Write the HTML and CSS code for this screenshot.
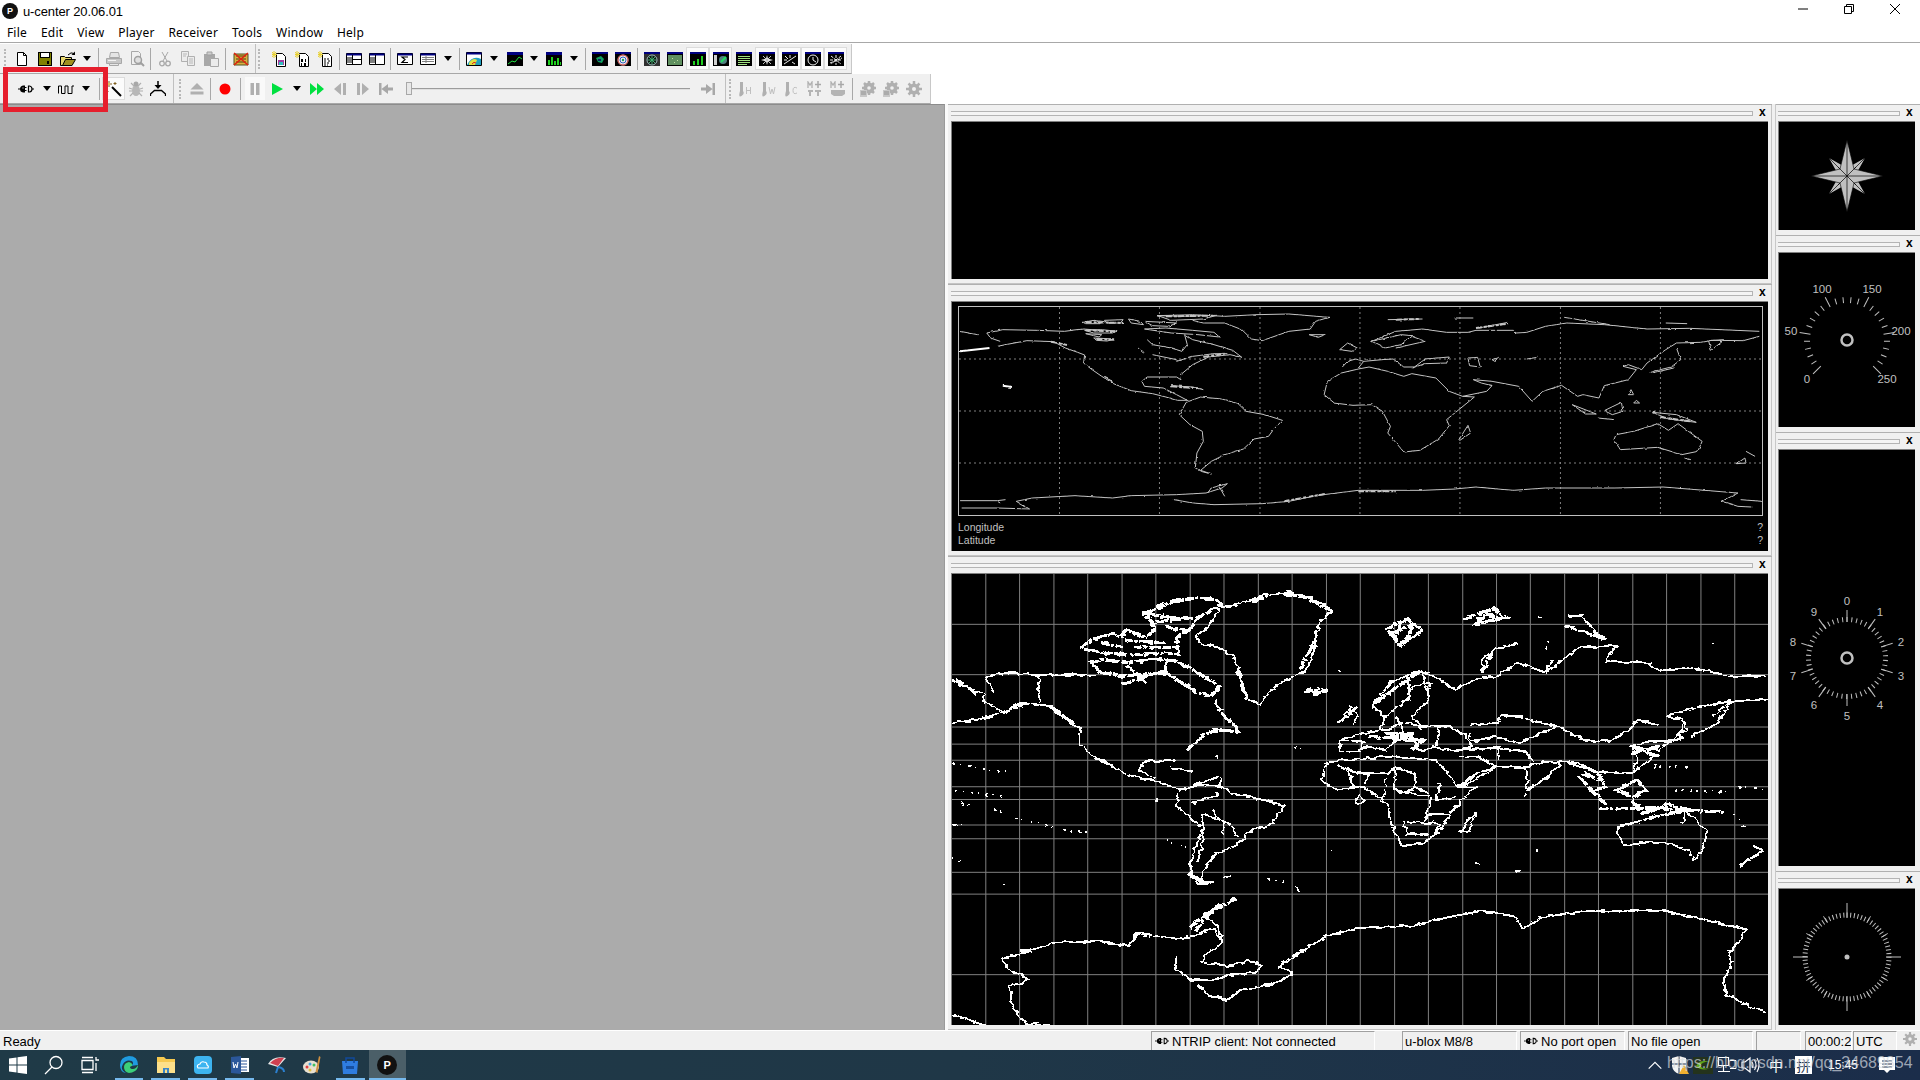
FILE: index.html
```html
<!DOCTYPE html>
<html lang="en">
<head>
<meta charset="utf-8">
<title>u-center 20.06.01</title>
<link rel="stylesheet" href="styles.css">
</head>
<body>
<svg class="sprite" aria-hidden="true">
<defs>
<filter id="rough" x="-3%" y="-3%" width="106%" height="106%" color-interpolation-filters="sRGB"><feTurbulence type="fractalNoise" baseFrequency=".07" numOctaves="2" seed="4" result="n"/><feDisplacementMap in="SourceGraphic" in2="n" scale="13" xChannelSelector="R" yChannelSelector="G"/><feComponentTransfer><feFuncA type="discrete" tableValues="0 1 1"/></feComponentTransfer></filter>
<filter id="rough2" x="-3%" y="-3%" width="106%" height="106%" color-interpolation-filters="sRGB"><feTurbulence type="fractalNoise" baseFrequency=".09" numOctaves="2" seed="7" result="n"/><feDisplacementMap in="SourceGraphic" in2="n" scale="6" xChannelSelector="R" yChannelSelector="G"/></filter>
</defs>
<symbol id="new" viewBox="0 0 16 16"><path d="M3.5 1.5h6l3 3v10h-9z" fill="#fff" stroke="#000"/><path d="M9.5 1.5v3h3" fill="none" stroke="#000"/></symbol>
<symbol id="save" viewBox="0 0 16 16"><path d="M1 1h14v14H1z" fill="#000"/><path d="M2 2h1v5h10V2h1v12H2z" fill="#808000"/><path d="M4 2h8v4H4z" fill="#fff"/><path d="M4 9h8v5H4z" fill="#808000"/><path d="M10 10h2v3h-2z" fill="#000"/></symbol>
<symbol id="open" viewBox="0 0 16 16"><path d="M.5 5.500h4l1 1h6v8H.5z" fill="#e8d870" stroke="#000"/><path d="M2.500 14.500l3-6h10l-3.500 6z" fill="#a09020" stroke="#000"/><path d="M8 4q3-3.500 6-1.500" stroke="#000" fill="none"/><path d="M15 .5v3.500h-3.500z" fill="#000"/></symbol>
<symbol id="print" viewBox="0 0 16 16"><path d="M4.500 1.500h8l1 5h-10z" fill="#e4e4e4" stroke="#a8a8a8"/><path d="M.5 7.500h15v5h-15z" fill="#c8c8c8" stroke="#a8a8a8"/><path d="M3.500 12.500h9v2h-9z" fill="#e8e8e8" stroke="#a8a8a8"/><path d="M2 9.500h8" stroke="#f4f4f4"/></symbol>
<symbol id="prev" viewBox="0 0 16 16"><path d="M2.500 .5h7l2 2v11h-9z" fill="#f0f0f0" stroke="#a8a8a8"/><circle cx="9" cy="9" r="3.500" fill="#e0e0e0" stroke="#a0a0a0" stroke-width="1.500"/><path d="M11.500 11.500l3.500 3.500" stroke="#a0a0a0" stroke-width="2"/></symbol>
<symbol id="cut" viewBox="0 0 16 16"><path d="M5 1l5 9M11 1L6 10" stroke="#a8a8a8" fill="none"/><circle cx="5" cy="12.500" r="2.300" fill="none" stroke="#a8a8a8" stroke-width="1.300"/><circle cx="11" cy="12.500" r="2.300" fill="none" stroke="#a8a8a8" stroke-width="1.300"/></symbol>
<symbol id="copy" viewBox="0 0 16 16"><path d="M1.500 .5h7v10h-7z" fill="#ececec" stroke="#b0b0b0"/><path d="M7.500 5.500h7v9h-7z" fill="#ececec" stroke="#b0b0b0"/><path d="M3 3h4M3 5h3M9 8h4M9 10h4M9 12h4" stroke="#b8b8b8"/></symbol>
<symbol id="paste" viewBox="0 0 16 16"><path d="M1 3h11v12H1z" fill="#a8a8a8"/><path d="M4 1h5v3H4z" fill="#d0d0d0" stroke="#a0a0a0"/><path d="M7.500 7.500h8v8h-8z" fill="#ececec" stroke="#a8a8a8"/></symbol>
<symbol id="db" viewBox="0 0 16 16"><path d="M1 3h14v11H1z" fill="#d8b040" stroke="#505020"/><path d="M3 5h10M3 8h10M3 11h10" stroke="#504010"/><path d="M1 2l14 12M15 2L1 14" stroke="#e02010" stroke-width="1.600"/></symbol>
<symbol id="docm" viewBox="1 0 16 16"><path d="M5.500 2.500h6l3 3v10h-9z" fill="#fff" stroke="#000"/><path d="M3 0v7M0 3.500h6M1 1l4 5M5 1L1 6" stroke="#e8d030"/><path d="M7 9h6v5H7z" fill="#a040a0"/><path d="M8 11h4v3H8z" fill="#30c0c0"/></symbol>
<symbol id="docb" viewBox="1 0 16 16"><path d="M5.500 2.500h6l3 3v10h-9z" fill="#fff" stroke="#000"/><path d="M3 0v7M0 3.500h6M1 1l4 5M5 1L1 6" stroke="#e8d030"/><path d="M7 8h2v3H7zM11 8h1v3h-1zM7 12h1v3H7zM10 12h2v3h-2z" fill="#000"/></symbol>
<symbol id="doct" viewBox="1 0 16 16"><path d="M5.500 2.500h6l3 3v10h-9z" fill="#fff" stroke="#000"/><path d="M3 0v7M0 3.500h6M1 1l4 5M5 1L1 6" stroke="#e8d030"/><path d="M7 8h6M7 10h3M11 10h2M7 12h6M7 14h4" stroke="#000" stroke-dasharray="2 1"/></symbol>
<symbol id="pane1" viewBox="0 0 16 16"><path d="M.5 2.500h15v11H.5z" fill="#fff" stroke="#000"/><path d="M.5 2.500h15v2H.5z" fill="#000080"/><path d="M6.500 4v9M6.500 8.500h9M1 7h5M1 9h5M1 11h5" stroke="#000"/></symbol>
<symbol id="pane2" viewBox="0 0 16 16"><path d="M.5 2.500h15v11H.5z" fill="#fff" stroke="#000"/><path d="M.5 2.500h15v2H.5z" fill="#000080"/><path d="M6.500 4v9M1 7h5M1 9h5M1 11h5" stroke="#000"/></symbol>
<symbol id="sigma" viewBox="0 0 16 16"><path d="M.5 2.500h15v11H.5z" fill="#fff" stroke="#000"/><path d="M.5 2.500h15v2H.5z" fill="#000080"/><path d="M11 6H5l3 2.500L5 11.500h6" fill="none" stroke="#000" stroke-width="1.200"/></symbol>
<symbol id="table" viewBox="0 0 16 16"><path d="M.5 2.500h15v11H.5z" fill="#fff" stroke="#000"/><path d="M.5 2.500h15v2H.5z" fill="#000080"/><path d="M2 6.500h12M2 8.500h12M2 10.500h12M6 5v7" stroke="#808080"/></symbol>
<symbol id="globe" viewBox="0 0 16 16"><path d="M.5 1.500h15v13H.5z" fill="#fff" stroke="#000"/><path d="M.5 1.500h15v2H.5z" fill="#000080"/><path d="M1 14q5-10 14-6v6z" fill="#20a0c0"/><path d="M3 12q4-6 8-3l-2 5H3z" fill="#e0e040"/><path d="M6 13q2-3 4-1" stroke="#e02020" fill="none"/></symbol>
<symbol id="w-line" viewBox="0 0 16 16"><path d="M0 1h16v14H0z" fill="#000"/><path d="M0 1h16v3H0z" fill="#000080"/><path d="M1 13l4-3 3 1 4-5 3 2" stroke="#20e040" fill="none"/></symbol>
<symbol id="w-bars" viewBox="0 0 16 16"><path d="M0 1h16v14H0z" fill="#000"/><path d="M0 1h16v3H0z" fill="#000080"/><path d="M2 9h2v5H2zM5 6h2v8H5zM8 10h2v4H8zM11 7h2v7h-2zM14 11h1v3h-1z" fill="#20d020"/></symbol>
<symbol id="w-sky" viewBox="0 0 16 16"><path d="M0 1h16v14H0z" fill="#000"/><path d="M0 1h16v2H0z" fill="#000080"/><path d="M4 7l5-2 3 3-2 4-4-1z" fill="#10a060"/><path d="M6 8h3v2H6z" fill="#102060"/></symbol>
<symbol id="w-radar" viewBox="0 0 16 16"><path d="M0 1h16v14H0z" fill="#000"/><path d="M0 1h16v2H0z" fill="#000080"/><circle cx="8" cy="9" r="5.500" fill="#f0f0f0"/><circle cx="8" cy="9" r="5" fill="none" stroke="#c03030"/><circle cx="8" cy="9" r="3" fill="none" stroke="#3060c0"/><circle cx="8" cy="9" r="1.200" fill="#20a060"/></symbol>
<symbol id="w-circ" viewBox="0 0 16 16"><path d="M0 1h16v14H0z" fill="#303030"/><path d="M0 1h16v2H0z" fill="#000080"/><circle cx="8" cy="9" r="5" fill="#101010" stroke="#a0c0c0"/><path d="M4 9h8M8 5v8M5 6l6 6M11 6l-6 6" stroke="#40b070"/></symbol>
<symbol id="w-grid" viewBox="0 0 16 16"><path d="M0 1h16v14H0z" fill="#000"/><path d="M0 1h16v2H0z" fill="#000080"/><path d="M1 4h14v10H1z" fill="#609060"/><path d="M5 7h1v1H5zM10 9h1v1h-1zM7 11h1v1H7z" fill="#c0e0a0"/></symbol>
<symbol id="w-bar2" viewBox="0 0 16 16"><path d="M0 1h16v14H0z" fill="#000"/><path d="M0 1h16v2H0z" fill="#000080"/><path d="M3 10h2v4H3zM7 8h2v6H7zM11 5h2v9h-2z" fill="#20d020"/></symbol>
<symbol id="w-map" viewBox="0 0 16 16"><path d="M0 1h16v14H0z" fill="#000"/><path d="M0 1h16v2H0z" fill="#000080"/><path d="M1 4h3v10H1z" fill="#d0d0d0"/><circle cx="10" cy="9" r="4" fill="#508080"/><path d="M8 11l5-5" stroke="#20e060" stroke-width="2"/></symbol>
<symbol id="w-list" viewBox="0 0 16 16"><path d="M0 1h16v14H0z" fill="#000"/><path d="M0 1h16v2H0z" fill="#000080"/><path d="M2 5.500h12M2 7.500h12M2 9.500h12M2 11.500h12M2 13.500h9" stroke="#a0e080"/></symbol>
<symbol id="w-star" viewBox="0 0 16 16"><path d="M0 1h16v14H0z" fill="#000"/><path d="M0 1h16v2H0z" fill="#000080"/><path d="M8 4l1 3.500L14 9l-5 1.500L8 14l-1-3.500L2 9l5-1.500z" fill="#e0e0e0"/><path d="M4 5l8 8M12 5l-8 8" stroke="#c0c0c0"/></symbol>
<symbol id="w-spd" viewBox="0 0 16 16"><path d="M0 1h16v14H0z" fill="#000"/><path d="M0 1h16v2H0z" fill="#000080"/><path d="M2 13L14 5M3 5l3 3M13 13l-3-2M8 4v3M2 9h3" stroke="#f0f0f0"/></symbol>
<symbol id="w-clk" viewBox="0 0 16 16"><path d="M0 1h16v14H0z" fill="#000"/><path d="M0 1h16v2H0z" fill="#000080"/><circle cx="8" cy="9" r="5" fill="none" stroke="#f0f0f0"/><path d="M8 6v3l3 2" stroke="#f0f0f0" fill="none"/></symbol>
<symbol id="w-cmp" viewBox="0 0 16 16"><path d="M0 1h16v14H0z" fill="#000"/><path d="M0 1h16v2H0z" fill="#000080"/><path d="M2 12l12-5M3 5l10 8M13 5L3 13M8 4v10M2 9h12" stroke="#f0f0f0" stroke-dasharray="3 1"/></symbol>
<symbol id="plug" viewBox="0 0 16 16"><path d="M0 8h2M14 8h2" stroke="#000"/><path d="M7 4.500H5Q2 5 2 8t3 3.500h2z" fill="#000"/><path d="M4.500 6.500h1v1h-1z" fill="#fff"/><path d="M7 6.500h1.500M7 9.500h1.500" stroke="#000"/><path d="M10.500 5h1q2.500.5 2.500 3t-2.500 3h-1z" fill="none" stroke="#000" stroke-width="1.200"/></symbol>
<symbol id="pulse" viewBox="0 0 16 16"><path d="M.5 12.500V5h3v7.500h3.500V5h3v7.500H14V5h2" fill="none" stroke="#000"/></symbol>
<symbol id="wand" viewBox="0 0 16 16"><path d="M6 6l9 9" stroke="#000" stroke-width="2"/><path d="M3 0v6M0 3h6M9 1v3M7.500 2.500h3M1 9v3M-.5 10.500H2.500" stroke="#806020"/><path d="M2 2l2 2M4 2L2 4" stroke="#e0c060"/></symbol>
<symbol id="bug" viewBox="0 0 16 16"><ellipse cx="8" cy="9.500" rx="4" ry="5.500" fill="#b8b8b8"/><circle cx="8" cy="3" r="2.500" fill="#a8a8a8"/><path d="M3 2l3 3M13 2l-3 3M1 7l3 1M15 7l-3 1M1 10h3M15 10h-3M2 15l3-3M14 15l-3-3" stroke="#b0b0b0" stroke-width="1.200"/></symbol>
<symbol id="dl" viewBox="0 0 16 16"><path d="M8 0v5" stroke="#000" stroke-width="1.500"/><path d="M4.500 4h7L8 8z" fill="#000"/><path d="M.5 15v-2l4-3.500h7l4 3.500v2" fill="none" stroke="#000" stroke-width="1.300"/></symbol>
<symbol id="eject" viewBox="0 0 16 16"><path d="M8 2l6.500 6.500h-13z" fill="#b0b0b0"/><path d="M1.500 10.500h13v3h-13z" fill="#b0b0b0"/></symbol>
<symbol id="rec" viewBox="0 0 16 16"><circle cx="8" cy="8" r="5.500" fill="#f00"/></symbol>
<symbol id="pause" viewBox="0 0 16 16"><path d="M3.500 2h3.500v12H3.500zM9 2h3.500v12H9z" fill="#b0b0b0"/></symbol>
<symbol id="play" viewBox="0 0 16 16"><path d="M3 2l11 6-11 6z" fill="#00e040"/></symbol>
<symbol id="ff" viewBox="0 0 16 16"><path d="M1 2l7 6-7 6zM8 2l7 6-7 6z" fill="#00e040"/></symbol>
<symbol id="sb" viewBox="0 0 16 16"><path d="M2 8l7-6v12zM11 2h3v12h-3z" fill="#b0b0b0"/></symbol>
<symbol id="sf" viewBox="0 0 16 16"><path d="M14 8L7 2v12zM2 2h3v12H2z" fill="#b0b0b0"/></symbol>
<symbol id="first" viewBox="0 0 16 16"><path d="M1 2h2.500v12H1zM3.500 8L10 3v3.500h5v3h-5V13z" fill="#a8a8a8"/></symbol>
<symbol id="last" viewBox="0 0 16 16"><path d="M15 2h-2.500v12H15zM12.500 8L6 3v3.500H1v3h5V13z" fill="#a8a8a8"/></symbol>
<symbol id="therm" viewBox="0 0 16 16"><path d="M2 1h3v9q2 3-1.500 5T2 10z" fill="#b0b0b0"/><path d="M8.500 6v7M12.500 6v7M8.500 9.500h4" stroke="#c0c0c0" fill="none"/></symbol>
<symbol id="thermw" viewBox="0 0 16 16"><path d="M2 1h3v9q2 3-1.500 5T2 10z" fill="#b0b0b0"/><path d="M8 6l1.500 7L11 8l1.500 5L14 6" stroke="#c0c0c0" fill="none"/></symbol>
<symbol id="thermc" viewBox="0 0 16 16"><path d="M2 1h3v9q2 3-1.500 5T2 10z" fill="#b0b0b0"/><path d="M13 7q-4-2-4 2.500T13 12" stroke="#c0c0c0" fill="none"/></symbol>
<symbol id="mplus" viewBox="0 0 16 16"><path d="M1 7V1l2 3 2-3v6" stroke="#b0b0b0" fill="none" stroke-width="1.300"/><path d="M11 0v7M8 3.500h6" stroke="#a8a8a8" stroke-width="1.500"/><path d="M1 9h5v2H1zM8 9h6v2H8zM2 11h2v4H2zM10 11h2v4h-2z" fill="#b4b4b4"/></symbol>
<symbol id="mplus2" viewBox="0 0 16 16"><path d="M1 7V1l2 3 2-3v6" stroke="#b0b0b0" fill="none" stroke-width="1.300"/><path d="M11 0v7M8 3.500h6" stroke="#a8a8a8" stroke-width="1.500"/><path d="M1 9h14v4l-3 2H4l-3-2z" fill="#b4b4b4"/></symbol>
<symbol id="gear" viewBox="0 0 16 16"><circle cx="8" cy="8" r="5.500" fill="#b0b0b0"/><path d="M8 0v16M0 8h16M2.500 2.500l11 11M13.500 2.500l-11 11" stroke="#b0b0b0" stroke-width="2.500"/><circle cx="8" cy="8" r="2" fill="#f0f0f0"/></symbol>
<symbol id="gear2" viewBox="0 0 16 16"><circle cx="9" cy="7" r="5.500" fill="#b0b0b0"/><path d="M9 0v14M2 7h14M4 2l10 10M14 2L4 12" stroke="#b0b0b0" stroke-width="2.500"/><circle cx="9" cy="7" r="1.800" fill="#f0f0f0"/><path d="M0 9h7v7H0z" fill="#c8c8c8"/><path d="M1 11h5M1 13h5" stroke="#909090"/></symbol>
</svg>

<div class="page">
  <header class="titlebar">
    <span class="appicon">P</span>
    <span class="apptitle">u-center 20.06.01</span>
    <div class="winbtns">
      <svg class="wb" viewBox="0 0 12 12"><path d="M1 6h10" stroke="#000"/></svg>
      <svg class="wb" viewBox="0 0 12 12"><path d="M1.500 3.500h7v7h-7zM3.500 3.500v-2h7v7h-2" fill="none" stroke="#000"/></svg>
      <svg class="wb" viewBox="0 0 12 12"><path d="M1 1l10 10M11 1L1 11" stroke="#000"/></svg>
    </div>
  </header>
  <nav class="menubar"><span>File</span><span>Edit</span><span>View</span><span>Player</span><span>Receiver</span><span>Tools</span><span>Window</span><span>Help</span></nav>

  <div class="toolbars">
    <div class="row row1">
      <i class="grip"></i>
      <span class="b"><svg class="ic"><use href="#new"/></svg></span>
      <span class="b"><svg class="ic"><use href="#save"/></svg></span>
      <span class="b"><svg class="ic"><use href="#open"/></svg></span>
      <span class="a w16"></span><span class="s w7"></span>
      <span class="b"><svg class="ic"><use href="#print"/></svg></span>
      <span class="b"><svg class="ic"><use href="#prev"/></svg></span>
      <span class="s"></span>
      <span class="b"><svg class="ic"><use href="#cut"/></svg></span>
      <span class="b"><svg class="ic"><use href="#copy"/></svg></span>
      <span class="b"><svg class="ic"><use href="#paste"/></svg></span>
      <span class="s w7"></span>
      <span class="b"><svg class="ic"><use href="#db"/></svg></span>
      <i class="edge"></i>
      <i class="grip g2"></i>
      <span class="b"><svg class="ic"><use href="#docm"/></svg></span>
      <span class="b"><svg class="ic"><use href="#docb"/></svg></span>
      <span class="b"><svg class="ic"><use href="#doct"/></svg></span>
      <span class="s"></span>
      <span class="b"><svg class="ic"><use href="#pane1"/></svg></span>
      <span class="b"><svg class="ic"><use href="#pane2"/></svg></span>
      <span class="s"></span>
      <span class="b"><svg class="ic"><use href="#sigma"/></svg></span>
      <span class="b"><svg class="ic"><use href="#table"/></svg></span>
      <span class="a"></span><span class="s"></span>
      <span class="b"><svg class="ic"><use href="#globe"/></svg></span>
      <span class="a"></span>
      <span class="b"><svg class="ic"><use href="#w-line"/></svg></span>
      <span class="a w16"></span>
      <span class="b"><svg class="ic"><use href="#w-bars"/></svg></span>
      <span class="a"></span><span class="s"></span>
      <span class="b"><svg class="ic"><use href="#w-sky"/></svg></span>
      <span class="b"><svg class="ic"><use href="#w-radar"/></svg></span>
      <span class="s w6"></span>
      <span class="b"><svg class="ic"><use href="#w-circ"/></svg></span>
      <span class="b"><svg class="ic"><use href="#w-grid"/></svg></span>
      <span class="b on"><svg class="ic"><use href="#w-bar2"/></svg></span>
      <span class="b on"><svg class="ic"><use href="#w-map"/></svg></span>
      <span class="b"><svg class="ic"><use href="#w-list"/></svg></span>
      <span class="b on"><svg class="ic"><use href="#w-star"/></svg></span>
      <span class="b on"><svg class="ic"><use href="#w-spd"/></svg></span>
      <span class="b on"><svg class="ic"><use href="#w-clk"/></svg></span>
      <span class="b on"><svg class="ic"><use href="#w-cmp"/></svg></span>
    </div>
    <div class="row row2">
      <i class="grip g3"></i>
      <span class="b w22"><svg class="ic"><use href="#plug"/></svg></span>
      <span class="a w19"></span>
      <span class="b w19"><svg class="ic"><use href="#pulse"/></svg></span>
      <span class="a w21"></span><span class="s w6"></span>
      <span class="b on"><svg class="ic"><use href="#wand"/></svg></span>
      <span class="b w21"><svg class="ic"><use href="#bug"/></svg></span>
      <span class="b"><svg class="ic"><use href="#dl"/></svg></span>
      <i class="edge e2"></i>
      <i class="grip g4"></i>
      <span class="b"><svg class="ic"><use href="#eject"/></svg></span>
      <span class="s"></span>
      <span class="b"><svg class="ic"><use href="#rec"/></svg></span>
      <span class="s w9"></span>
      <span class="b w20 on2"><svg class="ic"><use href="#pause"/></svg></span>
      <span class="b"><svg class="ic"><use href="#play"/></svg></span>
      <span class="a w17"></span>
      <span class="b"><svg class="ic"><use href="#ff"/></svg></span>
      <span class="b"><svg class="ic"><use href="#sb"/></svg></span>
      <span class="b"><svg class="ic"><use href="#sf"/></svg></span>
      <span class="b"><svg class="ic"><use href="#first"/></svg></span>
      <div class="slider"><i class="thumb"></i><i class="track"></i></div>
      <span class="b"><svg class="ic"><use href="#last"/></svg></span>
      <i class="edge e3"></i>
      <i class="grip g5"></i>
      <span class="b"><svg class="ic"><use href="#therm"/></svg></span>
      <span class="b"><svg class="ic"><use href="#thermw"/></svg></span>
      <span class="b"><svg class="ic"><use href="#thermc"/></svg></span>
      <span class="b"><svg class="ic"><use href="#mplus"/></svg></span>
      <span class="b"><svg class="ic"><use href="#mplus2"/></svg></span>
      <span class="s w7"></span>
      <span class="b"><svg class="ic"><use href="#gear2"/></svg></span>
      <span class="b"><svg class="ic"><use href="#gear2"/></svg></span>
      <span class="b"><svg class="ic"><use href="#gear"/></svg></span>
    </div>
  </div>

  <main class="main">
    <div class="mdi"></div>
    <div class="dock">
      <div class="col colL">
        <section class="panel hA"><div class="phead"><i class="handle"></i><b class="x">x</b></div>
          <div class="screen"></div></section>
        <section class="panel hB"><div class="phead"><i class="handle"></i><b class="x">x</b></div>
          <div class="screen mapwrap">
            <svg class="map small" viewBox="33 82 1502 624" preserveAspectRatio="none">
              <path class="grid" d="M221 82V706M408 82V706M596 82V706M783 82V706M970 82V706M1158 82V706M1345 82V706M33 238H1535M33 394H1535M33 550H1535"/>
              <g class="roughs">
              <path class="coast" d="M35 155L68 165M85 160L115 150L180 152L230 155L265 148L300 152M85 160L92 175L110 185M105 200L120 195L160 183L210 186L232 205L255 218L268 226L266 250L282 270L300 290L322 312L355 333L395 342L420 352L440 362L460 362M305 290L322 310L312 295ZM460 362L440 345L415 325L380 320L375 305L385 292L440 292L448 300L450 282L470 255L500 232L540 225L562 233L545 212L510 195L470 180L455 165M385 180L395 195L430 205L450 215L460 195L455 165M440 245L470 230L510 222L535 222M265 128L285 122L305 126L295 132L270 132ZM305 122L340 120L335 130L310 130ZM268 152L300 150L330 155L320 160L285 160ZM270 162L300 165L295 172ZM285 175L325 178L310 184L290 182ZM350 118L372 125L378 135L355 130ZM380 125L440 130L425 140L395 138ZM405 108L450 110L515 107L490 118L430 122ZM380 148L420 145L470 152L510 158L520 172L480 165L430 160ZM368 205L378 220M395 225L440 240M405 108L470 105L530 110L590 105L650 103L725 113L700 125L690 148L650 155L600 183L580 178L562 150L530 130L490 130L470 122M688 165L718 165L705 173ZM430 318L470 322L490 330M458 368L485 352L525 358L555 372L570 395L605 405L638 422L622 448L612 470L585 478L565 508L530 525L505 545L485 572L505 583L488 576L475 565L478 520L490 485L488 455L465 435L445 405L458 368M35 663L105 663L120 660M105 665L110 670M38 685L105 685L165 688L140 665L170 655L250 648L320 655L355 648L440 645L495 640M435 660L470 670L510 675L600 672L650 665L700 648L780 632L900 632L960 628L1000 622L1070 632L1130 625L1260 625L1350 622L1490 640L1460 665L1490 680L1515 682M1495 660L1535 665M495 640L525 625L535 612L505 625L498 640M520 622L530 650M780 268L748 280L722 305L716 345L735 370L770 377L805 375L825 395L840 440L835 460L865 517L895 512L930 478L950 438L945 420L968 390L997 352L975 350L950 335L925 295L880 282L865 290L835 275L800 262L780 268M968 480L985 437L990 460L970 482ZM750 262L760 245L775 238L790 245L780 265M790 245L825 240L845 238L865 262L885 262L905 238L950 232L945 250L905 252L880 265M745 210L760 190L778 205L768 215ZM805 185L860 165L880 168L860 195L830 205ZM880 170L905 185L850 205M805 185L850 155L900 148L945 158L985 158L1000 152L1070 152L1075 160L1095 158L1130 140L1170 130L1240 135L1320 148L1400 146L1530 155M1530 170L1500 183L1440 182L1420 188L1375 190L1355 210L1320 250L1310 270L1285 255L1275 260L1300 270L1285 300L1240 318L1230 355L1200 345L1190 350L1160 317L1125 335L1105 365L1080 320L1030 305L995 300L1010 310L1030 318L1020 335L975 350M985 235L1003 233L1008 262L988 258ZM1030 240L1042 233L1035 245ZM1095 238L1115 233M1435 183L1465 180L1440 212ZM1325 278L1365 262L1383 240L1375 205M1330 280L1370 265M1290 330L1295 345L1285 345ZM1300 362L1306 370L1295 370ZM1180 375L1225 403L1205 403ZM1240 393L1272 368L1275 395L1255 405ZM1228 415L1258 420M1330 398L1375 405L1412 428L1360 418ZM1262 465L1295 455L1340 432L1360 452L1378 432L1423 485L1415 515L1385 525L1340 503L1270 510L1258 480ZM1505 515L1522 530M1488 552L1503 535L1505 550ZM835 120L900 118M960 115L995 115M1005 145L1060 128M1165 113L1250 135M1355 130L1395 132M1390 535L1402 540"/>
              <path class="bold" d="M420 110L510 108M270 127L340 130M270 152L325 155M290 178L325 180M490 232L530 222M430 320L480 326M850 120L895 118M640 665L720 642M780 635L850 635M205 186L235 196M1345 412L1400 425M1000 145L1060 132"/>
              <path class="speck" d="M35 215L90 205M115 318L132 322"/>
              </g>
            </svg>
            <div class="legend">
              <span>Longitude</span><span>?</span>
              <span>Latitude</span><span>?</span>
            </div>
          </div></section>
        <section class="panel hC"><div class="phead"><i class="handle"></i><b class="x">x</b></div>
          <div class="screen">
            <svg class="map" viewBox="22 46 1521 1344" preserveAspectRatio="none">
              <path class="lat" d="M85 46V1390M148 46V1390M212 46V1390M275 46V1390M339 46V1390M402 46V1390M466 46V1390M529 46V1390M593 46V1390M656 46V1390M720 46V1390M783 46V1390M847 46V1390M910 46V1390M974 46V1390M1037 46V1390M1100 46V1390M1164 46V1390M1227 46V1390M1291 46V1390M1354 46V1390M1418 46V1390M1481 46V1390M22 196H1543M22 346H1543M22 502H1543M22 553H1543M22 601H1543M22 680H1543M22 718H1543M22 794H1543M22 835H1543M22 935H1543M22 1000H1543M22 1240H1543"/>
              <g class="rough3">
              <path class="fine" d="M525 145L560 135L600 110L650 100L690 115L730 155L710 185L700 240L695 290L680 335L640 365L610 400L597 435L575 420L560 360L545 290L520 265L490 255L475 235L500 205L520 150M22 490L70 480L120 458L150 430L170 432L205 440L235 480L262 510L260 550L285 590L320 620L350 645L395 660L440 685L460 690M85 350L130 340L185 348L240 345L290 350M22 360L50 385L80 400L85 430L120 458M85 350L100 400M185 348V430M440 600L380 605L370 630L400 655M300 595L330 630M430 625L470 635M475 675L520 650L525 680M445 690L480 672L525 678L540 700L590 715L640 735L620 790L580 810L550 855L510 885L490 930L490 965L510 965L480 970L465 940L470 890L490 800L470 780L440 735L445 690M490 760L490 840L480 900M490 760L540 790L555 830M470 730L520 700M505 750L530 790L525 820M720 610L710 660L740 690L790 680L825 720L840 745L835 770L860 855L900 850L935 800L950 760L985 700L1000 680L965 680L945 640L925 600L880 595L830 590L770 600L745 600L720 610M740 615L780 640L830 640L850 625L885 640L885 680L910 700M760 620L770 680M790 670L800 640M830 650L830 700L820 720M850 630L845 690M885 680L860 700L845 690L910 710M930 670L925 720L960 710M915 710L905 780M905 760L950 760M870 785L930 790L925 820L900 850M865 785L870 820L905 825M970 815L985 775L1000 755L985 815ZM745 540L790 545L780 575L745 575ZM745 490L765 440L780 470L770 495M805 440L840 370L890 335L920 350L960 390L1000 360L1040 350M805 440L830 470L870 420L880 380L915 370M745 540L790 520L830 510L860 490L900 500L950 500L980 530L990 560L960 575L920 560L900 575L880 545L850 540L830 570L800 560L780 570M830 470L820 510M850 470L870 530M880 470L900 510M900 340L910 420L880 470M870 350L875 420M915 370L905 410M840 520L880 520L890 570M930 500L925 560M1040 350L1075 310L1130 340L1190 265L1260 260L1240 305L1320 310L1340 335L1400 325L1470 350L1540 350M1010 340L1010 300L1040 265L1075 255M1170 170L1195 170L1235 240M1540 420L1470 425L1390 450L1355 470L1385 480L1390 510L1340 570L1290 560L1330 590L1290 640L1225 635L1190 610L1160 605L1125 660L1095 690L1090 620L1040 620L1000 640L965 680M960 570L1040 565L1090 575L1110 610L1095 625L1040 620L1000 590L965 590M970 680L1030 630M1440 470L1475 420L1450 490L1400 530M985 495L1040 490L1045 470L1080 470L1120 490L1150 500L1200 540L1230 545L1250 540L1285 510L1300 480L1340 495M1040 560L1040 600M985 520L990 545L1030 530L1080 550L1150 500M1285 560L1320 545L1380 540L1385 480M1290 560L1300 600L1290 640M1090 620L1125 605L1160 605L1225 635M1095 690L1125 660M1265 800L1330 770L1390 750L1430 815L1420 870L1405 900L1395 870L1360 850L1320 845L1275 855L1262 820ZM1390 750L1385 790M1490 915L1535 870L1515 855M115 1190L150 1180L210 1145L300 1140L350 1155L370 1115L440 1135L470 1125L510 1100L525 1150L500 1175L485 1205M500 1075L520 1100L525 1150M115 1190L125 1220L165 1255L130 1275L135 1340L160 1385L205 1392M630 1215L680 1165L720 1125L780 1100L880 1095L925 1075L1010 1050L1075 1068L1085 1105L1120 1070L1200 1050L1260 1050L1350 1050L1420 1075L1500 1105L1490 1140L1470 1175L1475 1210L1460 1250L1465 1300L1510 1335L1540 1350M440 1185L440 1225L470 1255L510 1255L540 1240L590 1235L600 1215L575 1195L545 1215L490 1205M480 1270L500 1300L535 1315L560 1285L620 1270L655 1240M630 1215L655 1230L655 1245M22 1358L85 1392M660 975L670 995M780 705L790 720L780 735L774 720Z"/>
              <path class="thick" d="M262 265L285 240L320 225L340 232L345 212L385 235L400 215L395 190L380 165L400 150L430 130L470 118L515 122L525 140L480 175L470 205L440 235L445 285L420 280L375 285L340 285L300 280L270 270ZM345 245L420 250M360 265L440 265M300 250L340 265M385 165L450 180M400 190L470 175M420 205L465 215M280 310L300 300L350 310L400 300L440 305L480 340L520 380L505 410L480 400L450 370L420 340L390 345L340 350L300 340ZM350 320L385 370M420 310L420 335M340 375L385 350M510 420L530 470L545 490L555 515L510 510L480 540L460 570M555 325L570 420M670 330L695 260L705 200M580 130L610 110M640 105L680 115L725 150M205 440L262 510M120 458L160 430M465 910L470 950L500 970M830 210L870 180L900 215L855 260L840 220L880 200L870 240M860 190L850 230M975 180L1030 150L1055 175L1000 195L1020 165L1040 180M1000 180L1030 165M1010 340L1030 280M740 490L780 440M810 430L890 340M830 520L880 530L890 570M1290 560L1340 590M1230 745L1330 745L1460 755M1190 650L1240 730M1225 640L1240 680L1220 690M1300 660L1315 690L1290 710L1260 690ZM1290 720L1310 760L1360 730M360 1115L390 1125M465 1100L495 1060L550 1012M475 1110L520 1030M150 1170L170 1165M680 395L720 390L700 405L690 390ZM30 360L70 405M1490 915L1535 870M1165 200L1240 240M1130 340L1140 300M800 530L900 540L880 570M1290 580L1340 560M1200 640L1230 660M1350 730L1400 750"/>
              <path class="dots" d="M25 610L130 640M30 690L120 710M40 730L60 735M100 750L120 760M25 790L50 795M140 775L210 800M230 812L280 815M1330 620L1400 620M1370 690L1470 695M1490 680L1540 690M1480 760L1500 800M660 560L680 565M610 955L640 965M1130 270L1135 240M1090 700L1095 710M22 895L40 905M420 840L460 860"/>
              <path class="speck" d="M730 868V873M1000 910H1006M1070 930H1080M530 945H540M400 718H406M115 972H118M1110 870H1114M1115 175H1120M1440 248V252M740 335H745M515 590H520"/>
              </g>
            </svg>
          </div></section>
      </div>
      <div class="col colR">
        <section class="panel h1"><div class="phead"><i class="handle"></i><b class="x">x</b></div>
          <div class="screen gauge">
            <svg class="rose" viewBox="-40 -40 80 80">
              <path class="rg" d="M18-18L8 0 18 18 0 8-18 18-8 0-18-18 0-8Z"/>
              <path class="rl" d="M18-18L-18 18M-18-18L18 18"/>
              <path class="rg re" d="M0-36L7-7 36 0 7 7 0 36-7 7-36 0-7-7Z"/>
              <path class="rl" d="M0-36V36M-36 0H36M9-9L-9 9M-9-9L9 9"/>
            </svg>
          </div></section>
        <section class="panel h2"><div class="phead"><i class="handle"></i><b class="x">x</b></div>
          <div class="screen gauge">
            <svg class="dial" viewBox="-66 -66 132 132">
              <circle class="hub" r="5.500"/>
              <path id="tl" class="tick" d="M0-37V-48" transform="rotate(-135)"/>
              <use href="#tl" transform="rotate(54)"/><use href="#tl" transform="rotate(108)"/><use href="#tl" transform="rotate(162)"/><use href="#tl" transform="rotate(216)"/><use href="#tl" transform="rotate(270)"/>
              <g class="tick">
                <path d="M0-37V-43" transform="rotate(-124.200)"/><path d="M0-37V-43" transform="rotate(-113.400)"/><path d="M0-37V-43" transform="rotate(-102.600)"/><path d="M0-37V-43" transform="rotate(-91.800)"/>
                <path d="M0-37V-43" transform="rotate(-70.200)"/><path d="M0-37V-43" transform="rotate(-59.400)"/><path d="M0-37V-43" transform="rotate(-48.600)"/><path d="M0-37V-43" transform="rotate(-37.800)"/>
                <path d="M0-37V-43" transform="rotate(-16.200)"/><path d="M0-37V-43" transform="rotate(-5.400)"/><path d="M0-37V-43" transform="rotate(5.400)"/><path d="M0-37V-43" transform="rotate(16.200)"/>
                <path d="M0-37V-43" transform="rotate(37.800)"/><path d="M0-37V-43" transform="rotate(48.600)"/><path d="M0-37V-43" transform="rotate(59.400)"/><path d="M0-37V-43" transform="rotate(70.200)"/>
                <path d="M0-37V-43" transform="rotate(91.800)"/><path d="M0-37V-43" transform="rotate(102.600)"/><path d="M0-37V-43" transform="rotate(113.400)"/><path d="M0-37V-43" transform="rotate(124.200)"/>
              </g>
              <g class="lab">
                <text x="-25" y="-50">100</text><text x="25" y="-50">150</text><text x="-56" y="-8">50</text><text x="54" y="-8">200</text><text x="-40" y="40">0</text><text x="40" y="40">250</text>
              </g>
            </svg>
          </div></section>
        <section class="panel h3"><div class="phead"><i class="handle"></i><b class="x">x</b></div>
          <div class="screen gauge">
            <svg class="dial" viewBox="-66 -66 132 132">
              <circle class="hub" r="5.500"/>
              <circle class="minor" r="38.500" transform="rotate(-90.700)"/>
              <path id="cl" class="tick" d="M0-36V-48"/>
              <use href="#cl" transform="rotate(36)"/><use href="#cl" transform="rotate(72)"/><use href="#cl" transform="rotate(108)"/><use href="#cl" transform="rotate(144)"/><use href="#cl" transform="rotate(180)"/><use href="#cl" transform="rotate(216)"/><use href="#cl" transform="rotate(252)"/><use href="#cl" transform="rotate(288)"/><use href="#cl" transform="rotate(324)"/>
              <g class="lab">
                <text x="0" y="-56">0</text><text x="33" y="-45">1</text><text x="54" y="-15">2</text><text x="54" y="19">3</text><text x="33" y="48">4</text><text x="0" y="59">5</text><text x="-33" y="48">6</text><text x="-54" y="19">7</text><text x="-54" y="-15">8</text><text x="-33" y="-45">9</text>
              </g>
            </svg>
          </div></section>
        <section class="panel h4"><div class="phead"><i class="handle"></i><b class="x">x</b></div>
          <div class="screen gauge">
            <svg class="dial" viewBox="-66 -66 132 132">
              <circle class="pip" r="2.500"/>
              <circle class="minor2" r="42" transform="rotate(-90.600)"/>
              <path class="tick" d="M0-39V-54M0 39V54M-39 0H-54M39 0H54"/>
              <path class="tick" d="M23.500-40.700L20-34.600M40.700-23.500L34.600-20M40.700 23.500L34.600 20M23.500 40.700L20 34.600M-23.500 40.700L-20 34.600M-40.700 23.500L-34.600 20M-40.700-23.500L-34.600-20M-23.500-40.700L-20-34.600"/>
            </svg>
          </div></section>
      </div>
    </div>
  </main>

  <footer class="statusbar">
    <span class="ready">Ready</span>
    <span class="cell c1"><svg class="mini"><use href="#plug"/></svg>NTRIP client: Not connected</span>
    <span class="cell c2">u-blox M8/8</span>
    <span class="cell c3"><svg class="mini"><use href="#plug"/></svg>No port open</span>
    <span class="cell c4">No file open</span>
    <span class="cell c5"></span>
    <span class="cell c6">00:00:20</span>
    <span class="cell c7">UTC</span>
    <span class="c8"><svg class="mini"><use href="#gear"/></svg></span>
  </footer>

  <div class="taskbar">
    <div class="tbleft">
      <span class="t t3"><svg class="ti" viewBox="0 0 20 20"><path d="M1 3.500l7.500-1v7H1zM9.500 2.300L19 1v8.500H9.500zM1 10.500h7.500v7l-7.500-1zM9.500 10.500H19V19l-9.500-1.300z" fill="#fff"/></svg></span>
      <span class="t t3"><svg class="ti" viewBox="0 0 20 20"><circle cx="12" cy="7.500" r="6" fill="none" stroke="#fff" stroke-width="1.300"/><path d="M8 12l-7 7" stroke="#fff" stroke-width="1.300"/></svg></span>
      <span class="t t3 tlast"><svg class="ti" viewBox="0 0 20 20"><path d="M2 5.500h11v9H2zM2 2.500h11M2 17.500h11M16 2v3h3M16 8v8" fill="none" stroke="#fff" stroke-width="1.300"/></svg></span>
      <span class="t u"><svg class="ti" viewBox="0 0 20 20"><path d="M1 10Q1 2 10 1q9 0 9 9l-8 1q5-2 2-5Q7 4 4 9 .5 15 7 18 1 17 1 10z" fill="#1f9be0"/><path d="M19 10q0 4-3 6t-6 2q-5-1-5-6 0-4 5-5 4 1 3 4-1 0-2 1 0 2 3 2 3 0 5-4z" fill="#3ccf7a"/></svg></span>
      <span class="t u"><svg class="ti" viewBox="0 0 20 20"><path d="M1 2h7l2 2h9v14H1z" fill="#f6c950"/><path d="M1 7h18v11H1z" fill="#fde08a"/><path d="M7 13h6v5H7z" fill="#3a86c8"/><path d="M9 14.500h2V18H9z" fill="#fde08a"/></svg></span>
      <span class="t u"><svg class="ti" viewBox="0 0 20 20"><rect x="1" y="1" width="18" height="18" rx="4" fill="#3db4f0"/><path d="M5 13q-2-3 2-4 1-3 4-2 3 0 3 3 2 1 1 3z" fill="none" stroke="#fff" stroke-width="1.200"/></svg></span>
      <span class="t u"><svg class="ti" viewBox="0 0 20 20"><path d="M7 3h12v14H7z" fill="#fff"/><path d="M9 6h8M9 9h8M9 12h8M9 15h8" stroke="#2b579a"/><path d="M1 2l10-1v18L1 18z" fill="#2b579a"/><path d="M3 7l1 6 1.500-4L7 13l1-6" fill="none" stroke="#fff"/></svg></span>
      <span class="t"><svg class="ti" viewBox="0 0 20 20"><path d="M1 9Q6 0 19 3L11 12z" fill="#e8e8e8"/><path d="M3 8q6-6 14-5l-6 8z" fill="#d04050"/><path d="M11 12q6 1 6 5M11 12l-2 6" stroke="#2b80d0" stroke-width="2" fill="none"/></svg></span>
      <span class="t"><svg class="ti" viewBox="0 0 20 20"><ellipse cx="8" cy="12" rx="8" ry="6.500" fill="#e8e0d0"/><circle cx="4" cy="12" r="1.500" fill="#e04040"/><circle cx="7" cy="9" r="1.500" fill="#40a0e0"/><circle cx="11" cy="10" r="1.500" fill="#40c060"/><circle cx="7" cy="15" r="1.500" fill="#e0c040"/><path d="M16 1l1.500 1-3 16-2-1z" fill="#d09040"/></svg></span>
      <span class="t u"><svg class="ti" viewBox="0 0 20 20"><path d="M2 6h16l-1 13H3z" fill="#2f7de0"/><path d="M6 8V3h8v5" fill="none" stroke="#124a9c" stroke-width="1.500"/><path d="M6 11h8v3H6z" fill="#18509e"/></svg></span>
      <span class="t act"><span class="pbadge">P</span></span>
    </div>
    <div class="tray">
      <svg class="ti chev" viewBox="0 0 20 20"><path d="M3 14l7-7 7 7" fill="none" stroke="#fff" stroke-width="1.300"/></svg>
      <svg class="ti shield" viewBox="0 0 20 20"><path d="M2 3l7-2 7 2v8q-1 6-7 8-6-2-7-8z" fill="#f4f4f4"/><path d="M9 1v18" stroke="#1c2f4a"/><path d="M2 9h14" stroke="#1c2f4a"/><path d="M14 10l5 9h-10z" fill="#f0b030"/></svg>
      <svg class="ti nv" viewBox="0 0 20 20"><path d="M0 2h20v17H0z" fill="#24331c"/><path d="M3 11q4-7 14-4-7-1-10 4 4 4 10 2-8 4-14-2z" fill="#5ea61a"/></svg>
      <svg class="ti net" viewBox="0 0 20 20"><path d="M1.500 2.500h10v8h-10zM6.500 10.500v6M1 16.500h12" fill="none" stroke="#fff" stroke-width="1.200"/><path d="M13 5.500h6v8h-6" fill="none" stroke="#fff"/></svg>
      <svg class="ti vol" viewBox="0 0 20 20"><path d="M2 7h3l5-4v14l-5-4H2z" fill="none" stroke="#fff" stroke-width="1.200"/><path d="M12 7q2 3 0 6M14.500 5q3 5 0 10M17 3q4 7 0 14" fill="none" stroke="#fff" stroke-width="1.100"/></svg>
      <span class="ime">中</span>
      <span class="ime pin">拼</span>
      <span class="clock">15:45</span>
      <svg class="ti note" viewBox="0 0 20 20"><path d="M2 2h16v13h-5l-3 3-3-3H2z" fill="#fff"/><path d="M5 6h10M5 9h10M5 12h10" stroke="#1c2f4a"/></svg>
    </div>
    <span class="watermark">https://blog.csdn.net/qq_34689854</span>
  </div>

  <div class="redbox"></div>
</div>
</body>
</html>
```

FILE: styles.css
```css
* { box-sizing: border-box; }
html, body { margin: 0; padding: 0; }
body { width: 1920px; height: 1080px; overflow: hidden; background: #fff; font-family: "Liberation Sans", Arial, sans-serif; color: #000; }
.sprite { position: absolute; width: 0; height: 0; }
.page { position: relative; width: 1920px; height: 1080px; display: flex; flex-direction: column; }

/* title + menu */
.titlebar { height: 22px; display: flex; align-items: center; padding-left: 2px; font-size: 13px; flex: none; }
.appicon { width: 16px; height: 16px; border-radius: 50%; background: #111; color: #fff; font-size: 9px; font-weight: bold; display: flex; align-items: center; justify-content: center; margin: 0 5px 0 0; }
.apptitle { margin-top: 0; letter-spacing: -.12px; }
.winbtns { margin-left: auto; display: flex; margin-right: 19px; gap: 34px; margin-top: -4px; }
.wb { width: 12px; height: 12px; }
.menubar { height: 21px; display: flex; font-family: "Noto Sans", sans-serif; font-size: 12px; letter-spacing: .25px; border-bottom: 1px solid #a8a8a8; flex: none; align-items: center; }
.menubar span { padding: 0 6.900px; }

/* toolbars */
.toolbars { height: 61px; background: #fff; flex: none; }
.row { height: 30px; display: flex; align-items: center; background: #f0f0f0; border-bottom: 1px solid #a8a8a8; }
.row1 { width: 852px; border-right: 1px solid #c8c8c8; margin-top: 1px; }
.row2 { width: 931px; border-right: 1px solid #c8c8c8; }
.grip { width: 3px; height: 20px; margin: 0 3px 0 4px; border-left: 2px dotted #b8b8b8; flex: none; }
.g2 { margin: 0 7px 0 2px; }
.g3 { margin: 0 8px 0 4px; }
.g4 { margin: 0 3px 0 5px; }
.g5 { margin: 0 2px 0 3px; }
.edge { width: 4px; height: 29px; border-right: 1px solid #c0c0c0; flex: none; }
.e2 { width: 5px; }
.e3 { width: 7px; }
.b { width: 23px; height: 23px; flex: none; display: flex; align-items: center; justify-content: center; }
.b.on { background: #fbfbfb; border: 1px solid #dcdcdc; }
.b.on2 { background: #f9f9f9; }
.ic { width: 16px; height: 16px; display: block; overflow: visible; }
.a { width: 18px; height: 23px; flex: none; display: flex; align-items: center; justify-content: center; }
.a::after { content: ""; border-style: solid; border-width: 5px 4.500px 0; border-color: #000 transparent transparent; }
.s { width: 5px; height: 23px; flex: none; display: flex; justify-content: center; align-items: center; }
.s::after { content: ""; width: 1px; height: 22px; background: #a8a8a8; }
.b.w19, .a.w19 { width: 19px; }
.b.w20, .a.w20 { width: 20px; }
.b.w21, .a.w21 { width: 21px; }
.b.w22 { width: 22px; }
.a.w16 { width: 16px; }
.a.w17 { width: 17px; }
.s.w6 { width: 6px; }
.s.w7 { width: 7px; }
.s.w9 { width: 9px; }
.slider { width: 299px; height: 23px; display: flex; align-items: center; padding: 0 6px 0 9px; flex: none; }
.thumb { width: 6px; height: 13px; background: #e8e8e8; border: 1px solid #a8a8a8; flex: none; }
.track { flex: 1; height: 2px; background: #9c9c9c; border-bottom: 1px solid #e0e0e0; }

/* main area */
.main { height: 926px; display: flex; flex: none; background: #f0f0f0; }
.mdi { width: 945px; background: #ababab; border-top: 1px solid #8c8c8c; border-right: 1px solid #9a9a9a; flex: none; }
.dock { flex: 1; display: flex; padding-left: 3px; background: linear-gradient(90deg, #fafafa, #fafafa 3px, #f0f0f0 3px); }
.col { display: flex; flex-direction: column; height: 100%; }
.colL { width: 824px; }
.colR { width: 145px; margin-left: 3px; border-left: 1px solid #c8c8c8; }
.panel { display: flex; flex-direction: column; background: #f0f0f0; border-top: 1px solid #b0b0b0; padding: 0 4px 5px 3px; flex: none; box-shadow: inset -1px -1px 0 #c4c4c4; }
.colR .panel { padding: 0 5px 5px 2px; box-shadow: none; }
.hA { height: 180px; }
.hB { height: 272px; }
.hC { height: 474px; }
.h1 { height: 131px; }
.h2 { height: 197px; }
.h3 { height: 439px; }
.h4 { height: 159px; }
.phead { height: 16px; display: flex; align-items: center; flex: none; }
.handle { flex: 1; height: 5px; border: 1px solid #b4b4b4; border-left: 0; background: #f4f4f4; }
.x { width: 15px; font-size: 12px; line-height: 11px; padding-left: 6px; font-weight: bold; margin-top: -2px; }
.screen { flex: 1; min-height: 0; background: #000; border-top: 1px solid #808080; border-left: 1px solid #808080; display: flex; }
.gauge { align-items: center; justify-content: center; overflow: hidden; }
.mapwrap { flex-direction: column; padding: 4px 5px 4px 6px; }
.map { width: 100%; height: 100%; display: block; }
.map path { fill: none; vector-effect: non-scaling-stroke; }
.small { flex: 1; min-height: 0; border: 1px solid #c0c0c0; }
.grid { stroke: #808080; stroke-width: 1; stroke-dasharray: 2 3; }
.roughs { filter: url(#rough2); }
.rough3 { filter: url(#rough); }
.coast { stroke: #c4c4c4; stroke-width: 1; }
.bold { stroke: #c4c4c4; stroke-width: 2; stroke-dasharray: 6 2 3 1; }
.lat { stroke: #808080; stroke-width: 1; }
.fine { stroke: #fff; stroke-width: 1.600; }
.thick { stroke: #fff; stroke-width: 3; stroke-dasharray: 9 1 3 2 14 1; }
.dots { stroke: #fff; stroke-width: 2; stroke-dasharray: 2 5 1 7; }
.speck { stroke: #fff; stroke-width: 2; }
.legend { display: grid; grid-template-columns: 1fr auto; color: #c0c0c0; font-size: 10.500px; line-height: 13px; padding-top: 5px; flex: none; }

.rose { width: 80px; height: 80px; }
.rg { fill: #c0c0c0; stroke: none; }
.re { stroke: #000; stroke-width: .6; }
.rl { stroke: #000; stroke-width: .7; fill: none; }
.dial { width: 132px; height: 132px; flex: none; overflow: visible; }
.hub { fill: none; stroke: #c0c0c0; stroke-width: 2.500; }
.pip { fill: #c0c0c0; }
.tick { stroke: #c0c0c0; stroke-width: 1; fill: none; }
.minor { fill: none; stroke: #c0c0c0; stroke-width: 5; stroke-dasharray: 1 3.838; }
.minor2 { fill: none; stroke: #c0c0c0; stroke-width: 5; stroke-dasharray: 1 2.665; }
.lab text { fill: #c0c0c0; font-size: 11.500px; text-anchor: middle; dominant-baseline: middle; font-family: "Liberation Sans", sans-serif; }

/* status bar */
.statusbar { height: 20px; background: #f0f0f0; display: flex; align-items: center; font-size: 13px; flex: none; border-top: 1px solid #fff; font-family: "Liberation Sans", sans-serif; }
.ready { width: 1151px; padding: 1px 0 0 3px; flex: none; }
.cell { height: 19px; display: flex; align-items: center; border-top: 1px solid #a0a0a0; border-left: 1px solid #a0a0a0; border-right: 1px solid #fff; padding-left: 2px; white-space: nowrap; overflow: hidden; flex: none; font-size: 13px; }
.mini { width: 14px; height: 14px; margin: 0 3px 0 1px; flex: none; }
.c1 { width: 224px; margin-right: 27px; }
.c2 { width: 115px; margin-right: 3px; }
.c3 { width: 105px; margin-right: 3px; }
.c4 { width: 125px; margin-right: 3px; }
.c5 { width: 45px; margin-right: 4px; }
.c6 { width: 47px; margin-right: 1px; }
.c7 { width: 44px; margin-right: 5px; }
.c8 { width: 16px; }

/* taskbar */
.taskbar { height: 30px; flex: none; position: relative; display: flex; justify-content: space-between; background: linear-gradient(90deg, #1f3a47 0%, #1f3747 50%, #1b2d4a 100%); color: #fff; }
.tbleft { display: flex; }
.t { width: 36.900px; height: 30px; display: flex; align-items: center; justify-content: center; position: relative; flex: none; }
.t3 { width: 36px; }
.tlast { margin-right: 2.500px; }
.t.u::after, .t.act::after { content: ""; position: absolute; left: 4px; right: 4px; bottom: 0; height: 2px; background: #76b9ed; }
.t.act { background: #4b5f68; }
.t.act::after { left: 0; right: 0; }
.ti { width: 20px; height: 20px; flex: none; }
.pbadge { width: 20px; height: 20px; border-radius: 50%; background: #111; color: #fff; font-size: 11px; font-weight: bold; display: flex; align-items: center; justify-content: center; }
.tray { display: flex; align-items: center; padding-right: 23px; font-family: "Noto Sans CJK SC", sans-serif; }
.chev { margin-right: 6px; width: 18px; height: 18px; }
.shield { margin-right: 3px; }
.nv { margin-right: 4px; }
.net { margin-right: 3px; }
.vol { margin-right: 5px; }
.ime { font-size: 14px; width: 22px; text-align: center; }
.pin { margin-left: 8px; background: #fff; color: #1c2f4a; width: 17px; line-height: 18px; }
.clock { font-size: 12px; font-family: "Liberation Sans", sans-serif; margin: 0 19px 0 16px; }
.watermark { position: absolute; left: 1667px; top: 4px; font-size: 16px; color: rgba(215, 220, 225, .7); white-space: nowrap; }

.redbox { position: absolute; left: 3px; top: 67px; width: 105px; height: 45px; border: 5px solid #e61f2d; }
```
